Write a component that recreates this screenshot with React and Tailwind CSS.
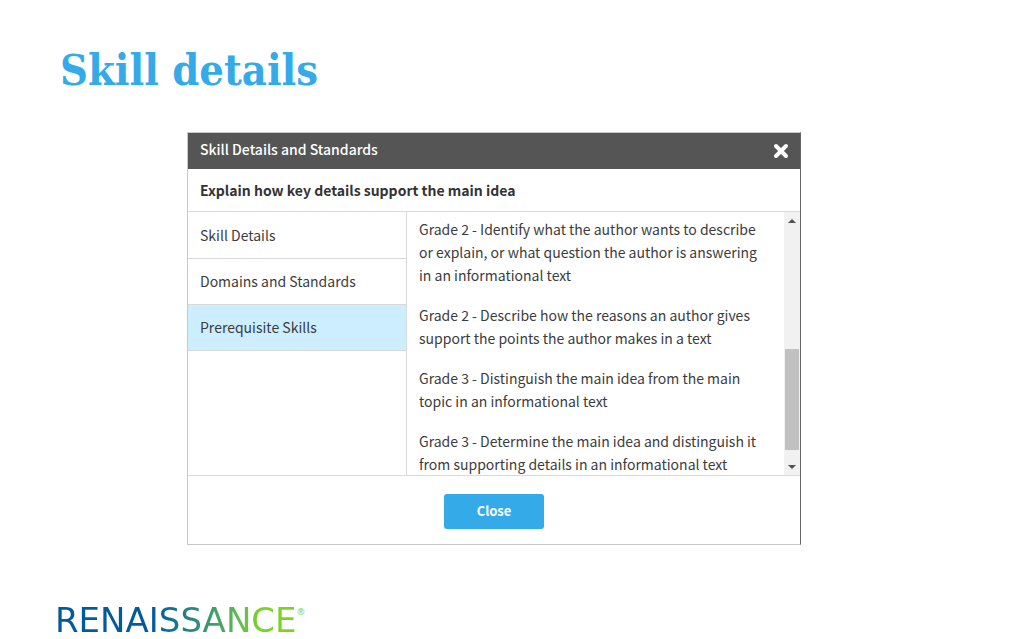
import clsx from 'clsx';

const tabs = ['Skill Details', 'Domains and Standards', 'Prerequisite Skills'];

const prerequisites = [
  'Grade 2 - Identify what the author wants to describe or explain, or what question the author is answering in an informational text',
  'Grade 2 - Describe how the reasons an author gives support the points the author makes in a text',
  'Grade 3 - Distinguish the main idea from the main topic in an informational text',
  'Grade 3 - Determine the main idea and distinguish it from supporting details in an informational text',
];

function CloseIcon() {
  return (
    <svg viewBox="0 0 16 16" className="h-4 w-4" aria-hidden="true">
      <path d="M3 3l10 10M13 3L3 13" stroke="currentColor" strokeWidth="4" strokeLinecap="round" />
    </svg>
  );
}

function ScrollBar() {
  return (
    <div className="flex w-4 shrink-0 flex-col items-center bg-[#f1f1f1]" aria-hidden="true">
      <svg viewBox="0 0 16 16" className="h-4 w-4 fill-[#505050]">
        <path d="M4 11l4-4 4 4z" />
      </svg>
      <div className="mt-[121px] h-[101px] w-[14px] bg-[#c1c1c1]" />
      <svg viewBox="0 0 16 16" className="mt-auto h-4 w-4 fill-[#505050]">
        <path d="M4 6l4 4 4-4z" />
      </svg>
    </div>
  );
}

function SkillDialog() {
  return (
    <section
      role="dialog"
      aria-labelledby="dialog-title"
      className="w-full max-w-[614px] border border-[#c8c8c8] border-r-[#666666] bg-white font-['Noto_Sans_CJK_SC',sans-serif] text-[14px] text-[#3c3c3c]"
    >
      <header className="flex h-9 items-center justify-between bg-[#555555] px-3 pb-1 text-white">
        <h2 id="dialog-title" className="font-medium">Skill Details and Standards</h2>
        <button type="button" aria-label="Close dialog" className="-mr-px pt-1">
          <CloseIcon />
        </button>
      </header>
      <h3 className="flex h-[43px] items-center border-b border-[#d9d9d9] px-3 font-bold text-[#333333]">
        Explain how key details support the main idea
      </h3>

      <div className="flex h-[264px] border-b border-[#d9d9d9]">
        <nav className="w-[219px] shrink-0 border-r border-[#d9d9d9] pt-px">
          {tabs.map((tab) => (
            <button
              key={tab}
              type="button"
              className={clsx(
                'flex h-[46px] w-full items-center border-b border-[#d9d9d9] px-3 text-left',
                tab === 'Prerequisite Skills' && 'bg-[#cceeff]',
              )}
            >
              {tab}
            </button>
          ))}
        </nav>
        <div className="flex flex-1 flex-col gap-[17px] overflow-hidden pt-[6px] pr-4 pl-3 leading-[23px]">
          {prerequisites.map((skill) => (
            <p key={skill} className="shrink-0">{skill}</p>
          ))}
        </div>
        <ScrollBar />
      </div>

      <footer className="flex h-[68px] items-center justify-center pt-0.5">
        <button type="button" className="h-[35px] w-[100px] rounded-[3px] bg-[#34abe8] text-[13px] font-bold text-white">
          Close
        </button>
      </footer>
    </section>
  );
}

export default function App() {
  return (
    <main className="flex min-h-screen flex-col bg-white">
      <h1 className="mt-10 px-[60px] font-['DejaVu_Serif_Condensed','DejaVu_Serif',serif] text-[43px] leading-[60px] font-bold text-[#34abe8]">
        Skill details
      </h1>
      <div className="mt-8 flex justify-center pr-[37px]">
        <SkillDialog />
      </div>
      <div className="mt-[57px] flex items-start px-[55px] font-['DejaVu_Sans',sans-serif]">
        <span className="bg-linear-to-r from-[#005a9c] from-40% via-[#3f9a6b] via-65% to-[#7dd321] to-85% bg-clip-text text-[34px] leading-9 text-transparent">
          RENAISSANCE
        </span>
        <span className="mt-1 text-[9px] leading-3 text-[#7dd321]">®</span>
      </div>
    </main>
  );
}
